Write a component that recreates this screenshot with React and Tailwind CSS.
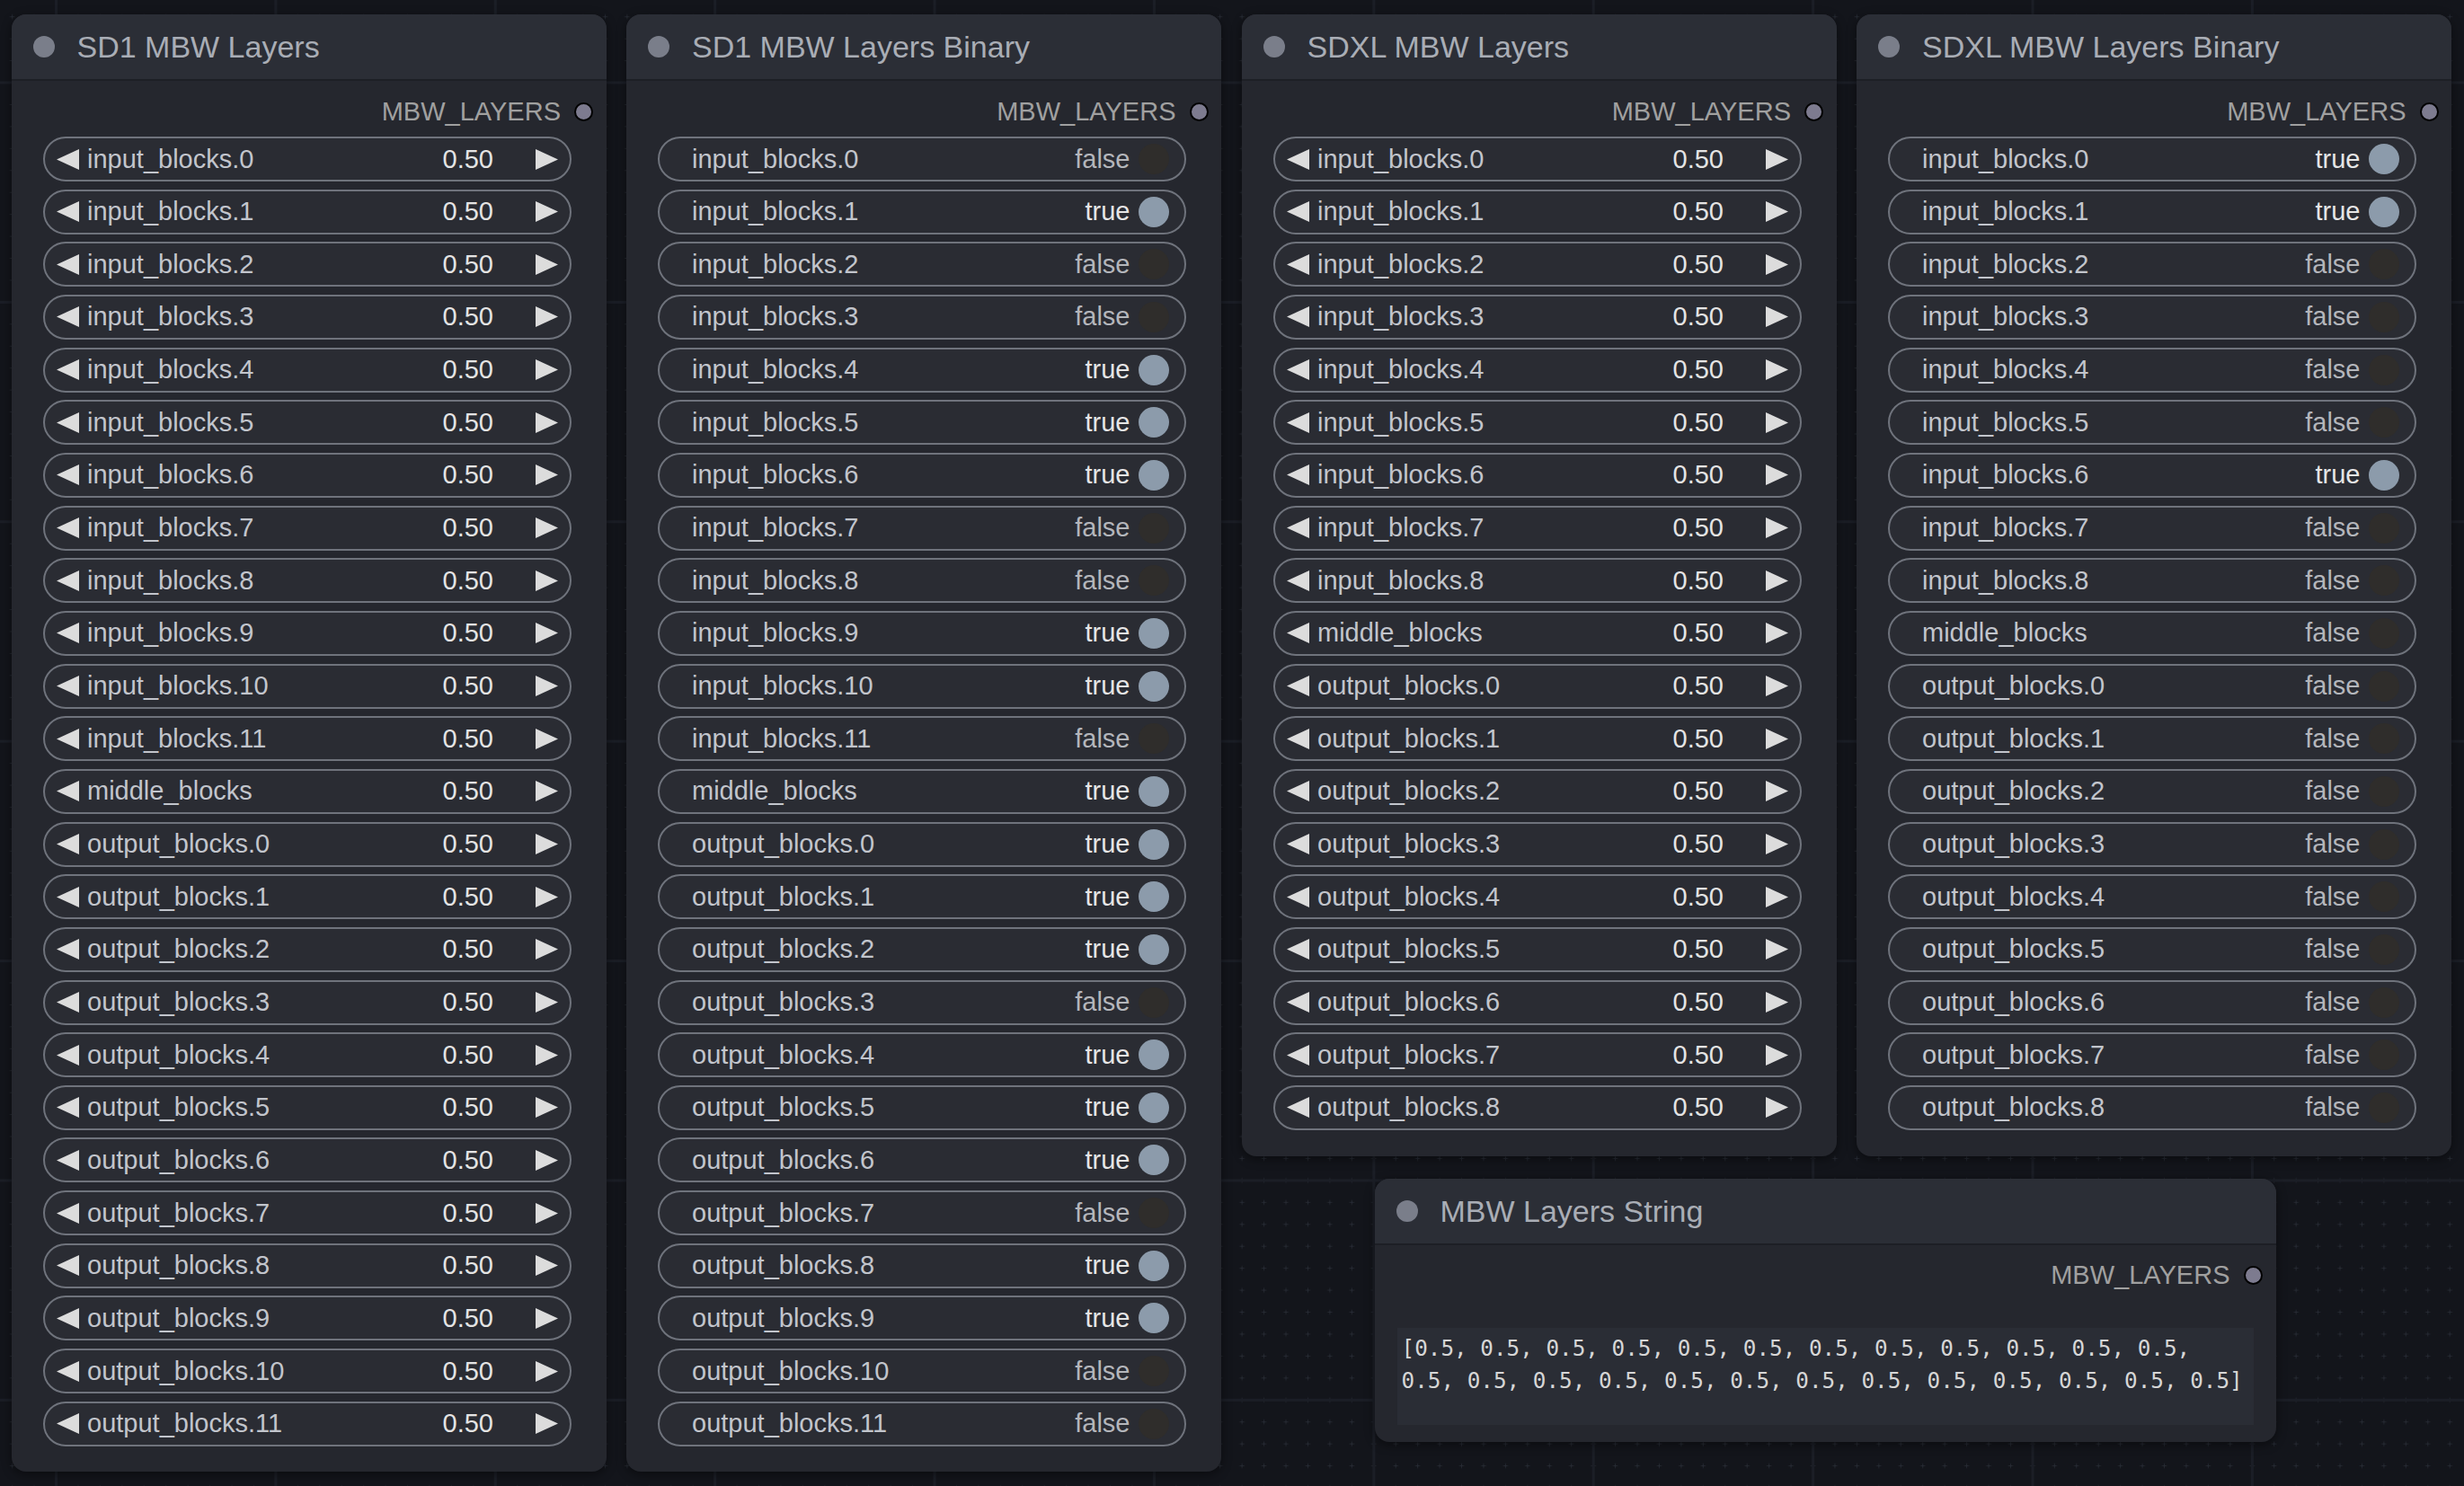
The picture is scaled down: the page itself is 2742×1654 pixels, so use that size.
import React from "react";

const SD1 = [
  ...Array.from({ length: 12 }, (_, i) => `input_blocks.${i}`),
  "middle_blocks",
  ...Array.from({ length: 12 }, (_, i) => `output_blocks.${i}`),
];
const SDXL = [
  ...Array.from({ length: 9 }, (_, i) => `input_blocks.${i}`),
  "middle_blocks",
  ...Array.from({ length: 9 }, (_, i) => `output_blocks.${i}`),
];

const SD1_BIN = [
  false, true, false, false, true, true, true, false, false, true, true, false,
  true,
  true, true, true, false, true, true, true, false, true, true, false, false,
];
const SDXL_BIN = [
  true, true, false, false, false, false, true, false, false,
  false,
  false, false, false, false, false, false, false, false, false,
];

function Node({ title, width = "w-[662px]", children }) {
  return (
    <div
      className={`${width} shrink-0 rounded-[16px] bg-[#25272e] shadow-[0_3px_12px_rgba(0,0,0,0.45)] overflow-hidden flex flex-col`}
    >
      <div className="h-[74px] flex items-center bg-[#2b2e36] border-b-2 border-[#1d1f25] pl-[24px]">
        <span className="w-[24px] h-[24px] rounded-full bg-[#7a7e8a] shrink-0" />
        <span className="ml-[25px] text-[34px] leading-none text-[#a9adb5] whitespace-nowrap">
          {title}
        </span>
      </div>
      {children}
    </div>
  );
}

function OutputRow() {
  return (
    <div className="mt-[14px] h-[40px] flex items-center justify-end pr-[14.5px]">
      <span className="text-[29px] leading-none text-[#a0a0a0]">MBW_LAYERS</span>
      <span className="ml-[15px] w-[21px] h-[21px] rounded-full bg-[#7d7b8f] border-2 border-black shrink-0" />
    </div>
  );
}

function LeftArrow() {
  return (
    <svg width="25" height="23" viewBox="0 0 25 23" className="shrink-0">
      <polygon points="25,0 25,23 0,11.5" fill="#dcdcdc" />
    </svg>
  );
}
function RightArrow() {
  return (
    <svg width="25" height="23" viewBox="0 0 25 23" className="shrink-0">
      <polygon points="0,0 0,23 25,11.5" fill="#dcdcdc" />
    </svg>
  );
}

function SliderPill({ label }) {
  return (
    <div className="w-[588px] h-[50px] rounded-full border-2 border-[#6f737c] bg-[#2a2c33] flex items-center">
      <span className="ml-[13.5px]">
        <LeftArrow />
      </span>
      <span className="ml-[9px] flex-1 text-[29px] leading-none text-[#c2c5cc] whitespace-nowrap">
        {label}
      </span>
      <span className="text-[29px] leading-none text-[#e4e4e4]">0.50</span>
      <span className="ml-[47px] mr-[12.5px]">
        <RightArrow />
      </span>
    </div>
  );
}

function TogglePill({ label, on }) {
  return (
    <div className="w-[588px] h-[50px] rounded-full border-2 border-[#6f737c] bg-[#2a2c33] flex items-center">
      <span className="ml-[36px] flex-1 text-[29px] leading-none text-[#c2c5cc] whitespace-nowrap">
        {label}
      </span>
      <span
        className={
          on
            ? "text-[29px] leading-none text-[#e6e6e6]"
            : "text-[29px] leading-none text-[#b4b6bb]"
        }
      >
        {on ? "true" : "false"}
      </span>
      <span
        className={
          on
            ? "ml-[9px] mr-[17.5px] w-[34px] h-[34px] rounded-full bg-[#8c9bab] shrink-0"
            : "ml-[9px] mr-[17.5px] w-[34px] h-[34px] rounded-full bg-[#2f2d2b] shrink-0"
        }
      />
    </div>
  );
}

function SliderNode({ title, rows, pb }) {
  return (
    <Node title={title}>
      <OutputRow />
      <div className={`mt-[8px] flex flex-col gap-[8.66px] pl-[35px] ${pb}`}>
        {rows.map((r) => (
          <SliderPill key={r} label={r} />
        ))}
      </div>
    </Node>
  );
}

function ToggleNode({ title, rows, values, pb }) {
  return (
    <Node title={title}>
      <OutputRow />
      <div className={`mt-[8px] flex flex-col gap-[8.66px] pl-[35px] ${pb}`}>
        {rows.map((r, i) => (
          <TogglePill key={r} label={r} on={values[i]} />
        ))}
      </div>
    </Node>
  );
}

export default function App() {
  const str =
    "[" + Array.from({ length: 25 }, () => "0.5").join(", ") + "]";
  return (
    <div
      className="w-[2742px] h-[1654px] overflow-hidden bg-[#13151b] font-['Liberation_Sans',Arial,sans-serif] [background-image:linear-gradient(to_right,#1b1e26_0_3px,transparent_3px),linear-gradient(to_bottom,#1b1e26_0_3px,transparent_3px),radial-gradient(ellipse_3.5px_1px_at_center,#262a33_40%,transparent_100%),radial-gradient(ellipse_1px_3.5px_at_center,#262a33_40%,transparent_100%)] [background-size:244.4px_244.4px,244.4px_244.4px,24.44px_24.44px,24.44px_24.44px] [background-position:61px_90.5px,61px_90.5px,50.3px_79.8px,50.3px_79.8px]"
    >
      <div className="flex items-start gap-[22.5px] pl-[12.5px] pt-[16px]">
        <SliderNode title="SD1 MBW Layers" rows={SD1} pb="pb-[28px]" />
        <ToggleNode
          title="SD1 MBW Layers Binary"
          rows={SD1}
          values={SD1_BIN}
          pb="pb-[28px]"
        />
        <div className="flex flex-col">
          <div className="flex items-start gap-[22.5px]">
            <SliderNode title="SDXL MBW Layers" rows={SDXL} pb="pb-[29px]" />
            <ToggleNode
              title="SDXL MBW Layers Binary"
              rows={SDXL}
              values={SDXL_BIN}
              pb="pb-[29px]"
            />
          </div>
          <div className="mt-[25px] ml-[148px]">
            <Node title="MBW Layers String" width="w-[1003px]">
              <div className="mt-[14px] h-[40px] flex items-center justify-end pr-[15px]">
                <span className="text-[29px] leading-none text-[#a0a0a0]">MBW_LAYERS</span>
                <span className="ml-[15px] w-[21px] h-[21px] rounded-full bg-[#7d7b8f] border-2 border-black shrink-0" />
              </div>
              <div className="mx-[25px] mt-[38px] mb-[19px] h-[108px] bg-[#2a2d35] px-[5px] pt-[5.5px] font-['DejaVu_Sans_Mono',monospace] text-[24.3px] leading-[35.5px] text-[#d6d6d6] break-words">
                {str}
              </div>
            </Node>
          </div>
        </div>
      </div>
    </div>
  );
}
